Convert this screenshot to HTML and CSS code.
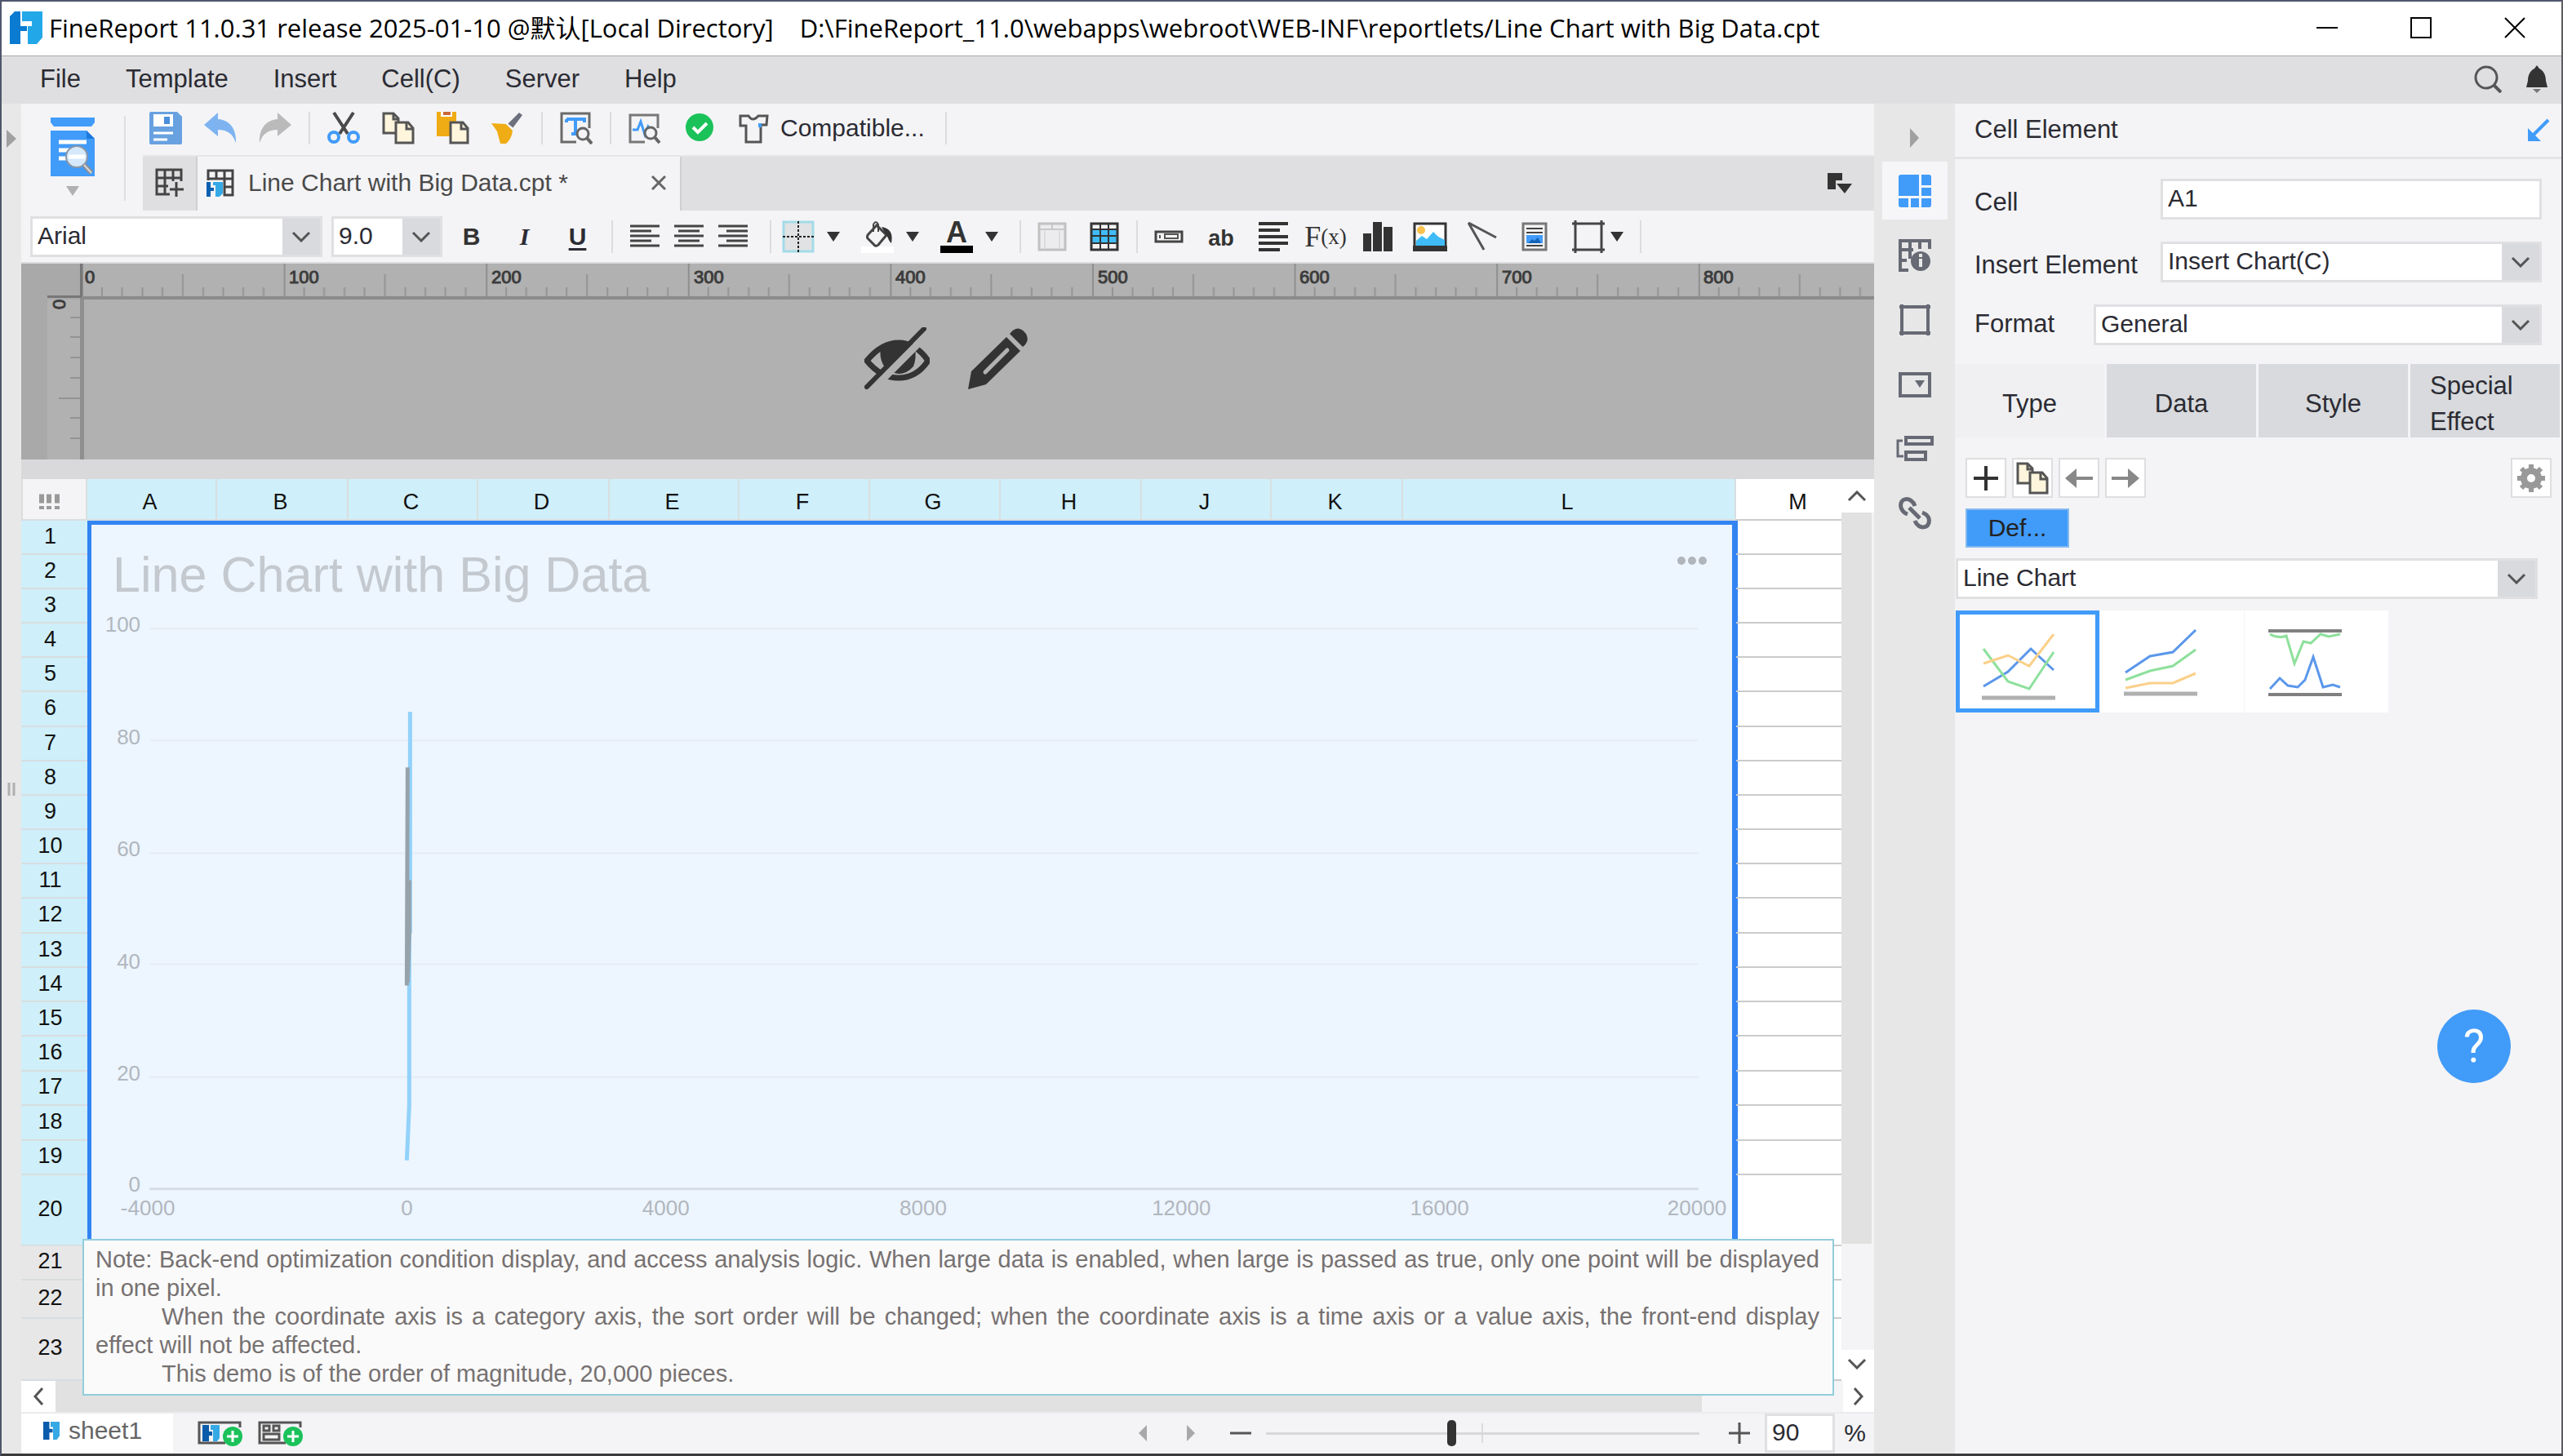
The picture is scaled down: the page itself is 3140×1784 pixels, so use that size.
FILE: index.html
```html
<!DOCTYPE html>
<html lang="en">
<head>
<meta charset="utf-8">
<meta name="viewport" content="width=device-width, initial-scale=1">
<title>FineReport Designer</title>
<link rel="stylesheet" href="styles.css">
</head>
<body>
<svg class="defs" width="0" height="0" aria-hidden="true">
  <symbol id="i-caret" viewBox="0 0 16 14"><path d="M0 1h16L8 13z" fill="#333"/></symbol>
  <symbol id="i-chevron" viewBox="0 0 24 14"><path d="M2 2l10 10L22 2" fill="none" stroke="#555" stroke-width="3"/></symbol>
  <symbol id="i-copy" viewBox="0 0 40 40"><path d="M2 2h12l6 6v18H2z" fill="#fff5dc" stroke="#555" stroke-width="3"/><path d="M14 2v7h6" fill="none" stroke="#555" stroke-width="3"/><path d="M17 13h15l6 7v18H17z" fill="#fff5dc" stroke="#555" stroke-width="3"/><path d="M30 13v8h8" fill="none" stroke="#555" stroke-width="3"/></symbol>
  <symbol id="i-logo" viewBox="0 0 40 40"><path d="M0 6L6 0h7v18h8v6h-8v16H0z" fill="#0a7bd1"/><path d="M15 0h25v32l-7 8H22V18h5v-6H15z" fill="#22a8e8"/></symbol>
</svg>

<div class="window">
  <header class="titlebar">
    <svg class="logo"><use href="#i-logo"/></svg>
    <h1 class="title"><span>FineReport 11.0.31 release 2025-01-10 @默认[Local Directory]</span><span>D:\FineReport_11.0\webapps\webroot\WEB-INF\reportlets/Line Chart with Big Data.cpt</span></h1>
    <div class="window-buttons">
      <button type="button" aria-label="Minimize"><svg width="26" height="26"><path d="M0 13h26" stroke="#000" stroke-width="2"/></svg></button>
      <button type="button" aria-label="Maximize"><svg width="26" height="26"><path d="M1 1h24v24H1z" fill="none" stroke="#000" stroke-width="2"/></svg></button>
      <button type="button" aria-label="Close"><svg width="26" height="26"><path d="M1 1l24 24M25 1L1 25" stroke="#000" stroke-width="2"/></svg></button>
    </div>
  </header>

  <nav class="menubar">
    <button type="button">File</button>
    <button type="button">Template</button>
    <button type="button">Insert</button>
    <button type="button">Cell(C)</button>
    <button type="button">Server</button>
    <button type="button">Help</button>
    <div class="menubar-tools">
      <button type="button" aria-label="Search"><svg width="34" height="34"><circle cx="15" cy="15" r="13" fill="none" stroke="#555" stroke-width="3"/><path d="M24 24l9 9" stroke="#555" stroke-width="4"/></svg></button>
      <button type="button" aria-label="Notifications"><svg width="26" height="34"><path d="M13 0l3 4c6 3 8 9 8 15l2 8H0l2-8C2 13 4 7 10 4z" fill="#333"/><path d="M8 29h10l-5 5z" fill="#777"/></svg></button>
    </div>
  </nav>

  <div class="main">
    <aside class="rail">
      <button type="button" aria-label="Expand left panel"><svg width="14" height="22"><path d="M1 0l12 11L1 22z" fill="#a0a0a0"/></svg></button>
      <svg class="grip" width="10" height="16"><path d="M2 0v16M8 0v16" stroke="#b0b0b0" stroke-width="3"/></svg>
    </aside>

    <main class="workspace">
      <div class="top">
        <button type="button" class="preview" aria-label="Preview">
          <svg width="54" height="72"><path d="M0 0h54v6l-4 5H4L0 6z" fill="#419bf9"/><path d="M0 16h44l10 10v46H0z" fill="#419bf9"/><path d="M44 16v10h10z" fill="#1b78dc"/><path d="M10 30h34M10 40h16M10 50h12" stroke="#fff" stroke-width="5"/><circle cx="32" cy="48" r="13" fill="#d6e9fb" stroke="#8a97a5" stroke-width="2"/><path d="M22 48h20" stroke="#fff" stroke-width="5"/><path d="M41 58l9 10" stroke="#8a8f96" stroke-width="6"/><path d="M41 58l9 10" stroke="#d8d8d8" stroke-width="2"/></svg>
          <svg width="16" height="12"><path d="M0 0h16L8 12z" fill="#b0b0b0"/></svg>
        </button>
        <div class="top-right">
          <div class="toolbar">
            <button type="button" class="tool" aria-label="Save"><svg class="icon"><path d="M0 2q0-2 2-2h32l6 6v32q0 2-2 2H2q-2 0-2-2z" fill="#68a1e0"/><path d="M5 3h24v15H5z" fill="#fff"/><path d="M18 6h7v9h-7z" fill="#4a8fdd"/><path d="M5 26h24M5 34h17" stroke="#fff" stroke-width="3"/></svg></button>
            <button type="button" class="tool" aria-label="Undo"><svg class="icon"><path d="M0 16L17 1v8c15 1 23 13 22 29C35 27 29 22 17 22v8z" fill="#7db3f0"/></svg></button>
            <button type="button" class="tool" aria-label="Redo"><svg class="icon"><path d="M40 16L23 1v8C8 10 0 22 1 38 5 27 11 22 23 22v8z" fill="#bababa"/></svg></button>
            <span class="divider"></span>
            <button type="button" class="tool" aria-label="Cut"><svg class="icon"><path d="M8 1l17 26M32 1L15 27" stroke="#4a4a4a" stroke-width="4"/><circle cx="8" cy="31" r="6" fill="none" stroke="#419bf9" stroke-width="4"/><circle cx="32" cy="31" r="6" fill="none" stroke="#419bf9" stroke-width="4"/></svg></button>
            <button type="button" class="tool" aria-label="Copy"><svg class="icon"><use href="#i-copy"/></svg></button>
            <button type="button" class="tool" aria-label="Paste"><svg class="icon"><path d="M0 0h24v30H0z" fill="#f0ac14"/><path d="M5 0h14v6H5z" fill="#fff"/><path d="M8 0h9v4H8z" fill="#c8693a"/><path d="M17 13h15l6 7v18H17z" fill="#fff5dc" stroke="#555" stroke-width="3"/><path d="M30 13v8h8" fill="none" stroke="#555" stroke-width="3"/></svg></button>
            <button type="button" class="tool" aria-label="Format painter"><svg class="icon"><path d="M20 15L34 1l4 3-12 16z" fill="#6c6f7c"/><path d="M0 14l18 1 8 8q-1 10-8 16h-7L7 24z" fill="#f0ac14"/><path d="M17 13l11 9" stroke="#f4f4f6" stroke-width="2"/></svg></button>
            <span class="divider"></span>
            <button type="button" class="tool" aria-label="Find"><svg class="icon"><path d="M20 37H2V2h34v18" fill="none" stroke="#6a6a6a" stroke-width="3"/><path d="M8 9v4M8 9h22v4M19 9v18M14 27h10" fill="none" stroke="#419bf9" stroke-width="4"/><circle cx="28" cy="27" r="7" fill="#f4f4f6" stroke="#666" stroke-width="3"/><path d="M33 32l6 7" stroke="#666" stroke-width="4"/></svg></button>
            <span class="divider"></span>
            <button type="button" class="tool" aria-label="Template check"><svg class="icon"><path d="M20 37H2V4h34v16" fill="none" stroke="#777" stroke-width="3"/><path d="M5 22h6l4-10 5 16 4-10 3 4h6" fill="none" stroke="#419bf9" stroke-width="3"/><circle cx="27" cy="26" r="7" fill="#f4f4f6" stroke="#666" stroke-width="3"/><path d="M32 31l6 7" stroke="#666" stroke-width="4"/></svg></button>
            <button type="button" class="tool" aria-label="Check passed"><svg class="icon"><circle cx="20" cy="19" r="17" fill="#1bc25a"/><path d="M12 19l6 6 11-11" fill="none" stroke="#fff" stroke-width="4"/></svg></button>
            <button type="button" class="tool tool-text"><svg class="icon"><path d="M6 5h8q5 8 12 0h11l-1 11h-7v21H11V17H4V5z" fill="none" stroke="#555" stroke-width="3"/><path d="M26 14h4v5h-4z" fill="#419bf9"/></svg>Compatible...</button>
            <span class="divider"></span>
          </div>
          <div class="tabs">
            <button type="button" class="tab-new" aria-label="New template"><svg width="36" height="36"><path d="M18 32H2V2h30v14M2 12h30M2 22h14M12 2v30M22 2v14" fill="none" stroke="#444" stroke-width="3"/><path d="M18 26h17M26 17v18" stroke="#444" stroke-width="3"/></svg></button>
            <div class="tab">
              <svg width="34" height="34"><path d="M2 14V2h30v30H22V12M2 12h30M12 2v10M22 2v10M22 22h10" fill="none" stroke="#444" stroke-width="3"/><path d="M0 16h5v7h4v4H5v7H0z" fill="#0a5fb0"/><path d="M8 16h12v14l-4 4h-5V20H8z" fill="#35a9e6"/></svg>
              <span>Line Chart with Big Data.cpt *</span>
              <button type="button" aria-label="Close tab"><svg width="18" height="18"><path d="M1 1l16 16M17 1L1 17" stroke="#666" stroke-width="3"/></svg></button>
            </div>
            <button type="button" class="tab-list" aria-label="Template list"><svg width="30" height="26"><path d="M0 0h18v9h-8v11H0z" fill="#333"/><path d="M11 13h19l-9 12z" fill="#333"/></svg></button>
          </div>
        </div>
      </div>

      <div class="formatbar">
        <div class="select font-name"><select aria-label="Font"><option>Arial</option></select><span class="arrow"><svg><use href="#i-chevron"/></svg></span></div>
        <div class="select font-size"><select aria-label="Font size"><option>9.0</option></select><span class="arrow"><svg><use href="#i-chevron"/></svg></span></div>
        <div class="letters">
          <button type="button" class="tool bold">B</button>
          <button type="button" class="tool italic">I</button>
          <button type="button" class="tool underline">U</button>
        </div>
        <span class="divider"></span>
        <div class="aligns">
          <button type="button" aria-label="Align left"><svg width="36" height="30"><path d="M0 2h36M0 8h26M0 14h36M0 20h26M0 26h36" stroke="#444" stroke-width="3"/></svg></button>
          <button type="button" aria-label="Align center"><svg width="36" height="30"><path d="M0 2h36M5 8h26M0 14h36M5 20h26M0 26h36" stroke="#444" stroke-width="3"/></svg></button>
          <button type="button" aria-label="Align right"><svg width="36" height="30"><path d="M0 2h36M10 8h26M0 14h36M10 20h26M0 26h36" stroke="#444" stroke-width="3"/></svg></button>
        </div>
        <span class="divider"></span>
        <button type="button" class="drop" aria-label="Borders"><svg class="icon"><path d="M2 2h36v36H2z" fill="#e0e2e4" stroke="#a3dbe8" stroke-width="3"/><path d="M20 1v38M1 20h38" stroke="#222" stroke-width="2" stroke-dasharray="3 2"/></svg><svg class="caret"><use href="#i-caret"/></svg></button>
        <button type="button" class="drop" aria-label="Fill color"><svg class="icon"><path d="M0 32h40v8H0z" fill="#fff"/><path d="M19 6L8 18q-1 3 0 4l9 9q2 1 4-1l10-12z" fill="none" stroke="#444" stroke-width="3"/><path d="M15 14V5q3-6 6 0v9" fill="none" stroke="#444" stroke-width="2"/><path d="M25 8c12 2 14 10 12 20-3-2-4-8-7-11z" fill="#333"/></svg><svg class="caret"><use href="#i-caret"/></svg></button>
        <button type="button" class="drop" aria-label="Font color"><span class="font-color">A</span><svg class="caret"><use href="#i-caret"/></svg></button>
        <span class="divider"></span>
        <button type="button" class="tool" aria-label="Merge cells"><svg width="36" height="36"><path d="M2 2h32v32H2z" fill="#ececef" stroke="#c0c0c0" stroke-width="3"/><path d="M2 9h32M18 2v7" stroke="#c8c8c8" stroke-width="2"/><path d="M9 11v22M27 11v22" stroke="#dcdcdc" stroke-width="2"/></svg></button>
        <button type="button" class="tool" aria-label="Cell grid"><svg width="36" height="36"><path d="M2 2h32v32H2z" fill="#f4f4f6"/><path d="M2 9h32v17H2z" fill="#3fbcf8"/><path d="M2 2h32v32H2z" fill="none" stroke="#333" stroke-width="3"/><path d="M2 9h32M2 17h32M2 26h32M13 2v32M23 2v32" fill="none" stroke="#333" stroke-width="2"/></svg></button>
        <span class="divider"></span>
        <button type="button" class="tool" aria-label="Widget"><svg width="36" height="16"><path d="M2 2h32v12H2z" fill="none" stroke="#444" stroke-width="3"/><path d="M7 6v4M13 5h16v5H13z" fill="none" stroke="#555" stroke-width="2"/></svg></button>
        <button type="button" class="tool ab">ab</button>
        <button type="button" class="tool" aria-label="Rich text"><svg width="36" height="38"><path d="M0 3h36M0 11h26M0 19h36M0 27h36M0 35h26" stroke="#333" stroke-width="4"/></svg></button>
        <button type="button" class="tool formula">F<small>(x)</small></button>
        <button type="button" class="tool" aria-label="Chart"><svg width="36" height="36"><path d="M0 14h10v22H0zM12 0h11v36H12zM25 6h11v30H25z" fill="#333"/></svg></button>
        <button type="button" class="tool" aria-label="Image"><svg width="42" height="36"><path d="M2 2h38v30H2z" fill="#fff" stroke="#333" stroke-width="3"/><circle cx="10" cy="10" r="5" fill="#fbc14d"/><path d="M4 29v-6l7-6 6 4 8-9 6 6 8 4v7z" fill="#3fbcf8"/><path d="M0 29h42v7H0z" fill="#333"/></svg></button>
        <button type="button" class="tool" aria-label="Slope line"><svg width="36" height="36"><path d="M1 1l34 18M1 1l19 33" stroke="#555" stroke-width="3"/></svg></button>
        <button type="button" class="tool" aria-label="Sub report"><svg width="32" height="36"><path d="M2 2h28v32H2z" fill="#f4f4f6" stroke="#777" stroke-width="3"/><path d="M6 8h20M6 13h20M6 29h20" stroke="#444" stroke-width="2"/><path d="M6 16h20v10H6z" fill="#419bf9"/><path d="M8 26l5-5 3 2 4-4 4 7z" fill="#1464b8"/></svg></button>
        <button type="button" class="drop compact" aria-label="Floating element"><svg class="icon"><path d="M4 0v40M36 0v40M0 4h40M0 36h40" stroke="#444" stroke-width="3"/></svg><svg class="caret"><use href="#i-caret"/></svg></button>
        <span class="divider"></span>
      </div>

      <section class="stage">
        <svg class="ruler-top" aria-hidden="true">
          <defs>
            <pattern id="ticks" x="74" y="0" width="247.6" height="44" patternUnits="userSpaceOnUse">
              <path d="M1 0v40" stroke="#8f8f8f" stroke-width="2"/>
              <path d="M124 13v27" stroke="#949494" stroke-width="2"/>
              <path d="M25 29v11M49.500 29v11M74.500 29v11M99 29v11M149 29v11M173.500 29v11M198 29v11M223 29v11" stroke="#949494" stroke-width="2"/>
            </pattern>
          </defs>
          <rect width="74" height="44" fill="#a9a9a9"/>
          <rect x="74" width="100%" height="44" fill="url(#ticks)"/>
          <rect x="72" width="3" height="44" fill="#777"/>
          <rect x="72" y="40" width="100%" height="4" fill="#8b8b8b"/>
          <rect x="32" y="39" width="42" height="3" fill="#777"/>
          <g class="ruler-label"><text x="78" y="24">0</text><text x="328" y="24">100</text><text x="576" y="24">200</text><text x="824" y="24">300</text><text x="1071" y="24">400</text><text x="1319" y="24">500</text><text x="1566" y="24">600</text><text x="1814" y="24">700</text><text x="2061" y="24">800</text></g>
        </svg>
        <div class="stage-body">
          <svg class="ruler-left" aria-hidden="true">
            <rect width="32" height="100%" fill="#a9a9a9"/>
            <rect x="72" width="5" height="100%" fill="#8f8f8f"/>
            <path d="M60 22h12M60 46h12M60 71h12M60 96h12M46 121h26M60 145h12M60 170h12" stroke="#949494" stroke-width="2"/>
            <text class="ruler-label" transform="translate(54 12) rotate(-90)">0</text>
          </svg>
          <div class="stage-tools">
            <button type="button" aria-label="Hide"><svg width="80" height="78"><path d="M3 41q18-22 39-22t36 22q-14 21-36 21T3 41z" fill="none" stroke="#333" stroke-width="7"/><path d="M20 26q20-10 42 0 2 12-2 22-8 9-18 9-14-2-19-11-5-10-3-20z" fill="#333"/><path d="M78 8L7 79" stroke="#b1b1b1" stroke-width="9"/><path d="M73 2L3 73" stroke="#333" stroke-width="6" stroke-linecap="round"/></svg></button>
            <button type="button" aria-label="Edit"><svg width="76" height="78"><path d="M48 12l17 17-42 41L1 76l4-22z" fill="#333"/><path d="M52 8q10-13 20 0 5 9-4 16z" fill="#333"/><path d="M22 55l27-27" stroke="#b1b1b1" stroke-width="5" stroke-linecap="round"/></svg></button>
          </div>
        </div>
      </section>
      <div class="splitter"></div>

      <section class="sheet">
        <div class="sheet-main">
          <table class="cells">
            <colgroup><col class="w81"><col class="w159"><col class="w161"><col class="w159"><col class="w161"><col class="w159"><col class="w160"><col class="w160"><col class="w173"><col class="w159"><col class="w161"><col class="w408"><col></colgroup>
            <thead><tr><th class="corner"><svg width="26" height="20"><path d="M0 6h6M9 6h6M19 6h6" stroke="#999" stroke-width="11"/><path d="M0 17h6M9 17h6M19 17h6" stroke="#999" stroke-width="4"/></svg></th><th>A</th><th>B</th><th>C</th><th>D</th><th>E</th><th>F</th><th>G</th><th>H</th><th>J</th><th>K</th><th>L</th><th class="plain">M</th></tr></thead>
            <tbody>
              <tr><th>1</th>
                <td class="chart" colspan="11" rowspan="20">
                  <svg viewBox="5 5 2008 878" role="img" aria-label="Line Chart with Big Data">
                    <path d="M76 132h1896M76 269h1896M76 407h1896M76 543h1896M76 681h1896" stroke="#e5ecf4" stroke-width="2"/>
                    <path d="M76 818h1896" stroke="#d6dde5" stroke-width="3"/>
                    <path d="M395 234v271M394 505v210l-3 68" fill="none" stroke="#92d2fb" stroke-width="5"/>
                    <path d="M392 302l-1 267M394 440v65l-2 60" fill="none" stroke="#97a3ab" stroke-width="5"/>
                    <text class="chart-title" x="31" y="87">Line Chart with Big Data</text>
                    <g fill="#b0b5bb"><circle cx="1951" cy="49" r="5"/><circle cx="1964" cy="49" r="5"/><circle cx="1977" cy="49" r="5"/></g>
                    <g class="axis axis-y"><text x="65" y="136">100</text><text x="65" y="274">80</text><text x="65" y="411">60</text><text x="65" y="548">40</text><text x="65" y="685">20</text><text x="65" y="821">0</text></g>
                    <g class="axis axis-x"><text x="74" y="850">-4000</text><text x="391" y="850">0</text><text x="708" y="850">4000</text><text x="1023" y="850">8000</text><text x="1339" y="850">12000</text><text x="1655" y="850">16000</text><text x="1970" y="850">20000</text></g>
                  </svg>
                </td><td></td></tr>
              <tr><th>2</th><td></td></tr>
              <tr><th>3</th><td></td></tr>
              <tr><th>4</th><td></td></tr>
              <tr><th>5</th><td></td></tr>
              <tr><th>6</th><td></td></tr>
              <tr><th>7</th><td></td></tr>
              <tr><th>8</th><td></td></tr>
              <tr><th>9</th><td></td></tr>
              <tr><th>10</th><td></td></tr>
              <tr><th>11</th><td></td></tr>
              <tr><th>12</th><td></td></tr>
              <tr><th>13</th><td></td></tr>
              <tr><th>14</th><td></td></tr>
              <tr><th>15</th><td></td></tr>
              <tr><th>16</th><td></td></tr>
              <tr><th>17</th><td></td></tr>
              <tr><th>18</th><td></td></tr>
              <tr><th>19</th><td></td></tr>
              <tr class="h87"><th>20</th><td></td></tr>
              <tr class="unselected"><th>21</th><td colspan="11"></td><td></td></tr>
              <tr class="unselected h47"><th>22</th><td colspan="11"></td><td></td></tr>
              <tr class="unselected h76"><th>23</th><td colspan="11"></td><td></td></tr>
            </tbody>
          </table>
          <div class="vscroll">
            <button type="button" class="up" aria-label="Scroll up"><svg><use href="#i-chevron"/></svg></button>
            <div class="vthumb"></div>
            <button type="button" class="down" aria-label="Scroll down"><svg><use href="#i-chevron"/></svg></button>
          </div>
        </div>
        <div class="hscroll">
          <button type="button" aria-label="Scroll left"><svg width="14" height="24"><path d="M12 2L3 12l9 10" fill="none" stroke="#555" stroke-width="3"/></svg></button>
          <div class="hthumb"></div>
          <button type="button" aria-label="Scroll right"><svg width="14" height="24"><path d="M2 2l9 10-9 10" fill="none" stroke="#555" stroke-width="3"/></svg></button>
        </div>
        <div class="note">
          <p>Note: Back-end optimization condition display, and access analysis logic. When large data is enabled, when large is passed as true, only one point will be displayed in one pixel.</p>
          <p class="indent full">When the coordinate axis is a category axis, the sort order will be changed; when the coordinate axis is a time axis or a value axis, the front-end display</p>
          <p>effect will not be affected.</p>
          <p class="indent">This demo is of the order of magnitude, 20,000 pieces.</p>
        </div>
      </section>

      <footer class="statusbar">
        <button type="button" class="sheet-tab"><svg width="20" height="22" viewBox="0 0 40 40" preserveAspectRatio="none"><path d="M0 0h15v16h8v8h-8v16H0z" fill="#0a5bab"/><path d="M18 0h22v32l-7 8H24V12h-6z" fill="#35a9e6"/></svg>sheet1</button>
        <button type="button" class="add-sheet" aria-label="Add report sheet"><svg width="56" height="32"><path d="M34 28H2V3h50v6" fill="none" stroke="#555" stroke-width="3"/><path d="M6 6h8v8h4v5h-4v7H6z" fill="#0a5bab"/><path d="M16 6h11v16l-3 4h-5V12h-3z" fill="#35a9e6"/><circle cx="43" cy="20" r="12" fill="#1bc25a"/><path d="M36 20h14M43 13v14" stroke="#fff" stroke-width="3"/></svg></button>
        <button type="button" class="add-sheet" aria-label="Add form sheet"><svg width="56" height="32"><path d="M34 28H2V3h50v6" fill="none" stroke="#555" stroke-width="3"/><path d="M7 7h7v6H7zM19 7h7v6h-7zM7 17h19v7H7z" fill="none" stroke="#555" stroke-width="3"/><circle cx="43" cy="20" r="12" fill="#1bc25a"/><path d="M36 20h14M43 13v14" stroke="#fff" stroke-width="3"/></svg></button>
        <div class="zoom">
          <button type="button" class="nav" aria-label="Previous sheet"><svg width="10" height="20"><path d="M10 0v20L0 10z" fill="#a8a8a8"/></svg></button>
          <button type="button" class="nav" aria-label="Next sheet"><svg width="10" height="20"><path d="M0 0v20l10-10z" fill="#a8a8a8"/></svg></button>
          <button type="button" aria-label="Zoom out"><svg width="26" height="26"><path d="M0 13h26" stroke="#555" stroke-width="3"/></svg></button>
          <input class="slider" type="range" min="10" max="190" value="87" aria-label="Zoom">
          <button type="button" aria-label="Zoom in"><svg width="26" height="26"><path d="M0 13h26M13 0v26" stroke="#555" stroke-width="3"/></svg></button>
          <label class="percent"><input type="text" value="90" aria-label="Zoom percent"> %</label>
        </div>
      </footer>
    </main>

    <nav class="iconbar">
      <button type="button" aria-label="Collapse right panel"><svg width="14" height="24"><path d="M1 0l11 12L1 24z" fill="#a0a0a0"/></svg></button>
      <button type="button" class="active" aria-label="Cell element"><svg class="icon"><path d="M3 0h22v26H0V3q0-3 3-3zM28 0h9q3 0 3 3v10H28zM28 16h12v10H28zM0 29h12v11H3q-3 0-3-3zM15 29h10v11H15zM28 29h12v8q0 3-3 3h-9z" fill="#419bf9"/></svg></button>
      <button type="button" aria-label="Cell attributes"><svg class="icon"><path d="M12 38H2V2h36v10M2 13h16M14 2v22M26 2v10M2 26h8" fill="none" stroke="#676a74" stroke-width="4"/><circle cx="27" cy="27" r="12" fill="#676a74"/><path d="M27 24v10M27 18v4" stroke="#e8e8e8" stroke-width="4"/></svg></button>
      <button type="button" aria-label="Floating element"><svg class="icon"><path d="M4 1v38M36 1v38M1 4h38M1 36h38" stroke="#676a74" stroke-width="4"/></svg></button>
      <button type="button" aria-label="Widget settings"><svg class="icon"><path d="M2 7h36v27H2z" fill="none" stroke="#676a74" stroke-width="4"/><path d="M20 15h12l-6 9z" fill="#676a74"/></svg></button>
      <button type="button" aria-label="Condition attributes"><svg width="46" height="40"><path d="M12 6h32v8H12zM12 24h24v9H12z" fill="none" stroke="#676a74" stroke-width="4"/><path d="M8 10H2v19h7" fill="none" stroke="#676a74" stroke-width="3"/></svg></button>
      <button type="button" aria-label="Hyperlink"><svg class="icon"><g fill="none" stroke="#676a74" stroke-width="5"><path d="M20 11C16-1 0 0 3 13q2 6 8 8M20 29c4 12 20 10 17-3q-2-5-8-7"/><path d="M13 13l13 13"/></g></svg></button>
    </nav>

    <aside class="panel">
      <header class="panel-head"><h2>Cell Element</h2><button type="button" aria-label="Pop out"><svg width="28" height="28"><path d="M26 2L8 20" stroke="#419bf9" stroke-width="4"/><path d="M1 12v16h16z" fill="#419bf9"/></svg></button></header>
      <form class="props">
        <div class="prop"><label for="cell">Cell</label><input id="cell" type="text" value="A1"></div>
        <div class="prop"><label for="element">Insert Element</label><div class="select"><select id="element"><option>Insert Chart(C)</option></select><span class="arrow"><svg><use href="#i-chevron"/></svg></span></div></div>
        <div class="prop short"><label for="format">Format</label><div class="select"><select id="format"><option>General</option></select><span class="arrow"><svg><use href="#i-chevron"/></svg></span></div></div>
      </form>
      <div class="panel-tabs">
        <button type="button" class="current">Type</button><button type="button">Data</button><button type="button">Style</button><button type="button" class="wrap">Special Effect</button>
      </div>
      <div class="chart-actions">
        <button type="button" aria-label="Add"><svg width="30" height="30"><path d="M0 15h30M15 0v30" stroke="#333" stroke-width="4"/></svg></button>
        <button type="button" aria-label="Duplicate"><svg class="icon"><use href="#i-copy"/></svg></button>
        <button type="button" aria-label="Move left"><svg width="34" height="24"><path d="M10 12h24" stroke="#888" stroke-width="4"/><path d="M0 12L14 0v24z" fill="#888"/></svg></button>
        <button type="button" aria-label="Move right"><svg width="34" height="24"><path d="M0 12h24" stroke="#888" stroke-width="4"/><path d="M34 12L20 0v24z" fill="#888"/></svg></button>
        <button type="button" class="gear" aria-label="Settings"><svg width="34" height="34"><circle cx="17" cy="17" r="9" fill="none" stroke="#999" stroke-width="8"/><path d="M17 0v5M17 29v5M0 17h5M29 17h5M5 5l4 4M25 25l4 4M29 5l-4 4M9 25l-4 4" stroke="#999" stroke-width="6"/></svg></button>
      </div>
      <button type="button" class="chart-name">Def...</button>
      <div class="select chart-kind"><select aria-label="Chart type"><option>Line Chart</option></select><span class="arrow"><svg><use href="#i-chevron"/></svg></span></div>
      <div class="thumbs">
        <button type="button" class="chosen" aria-label="Line"><svg width="96" height="84" fill="none" stroke-width="3"><path d="M4 64l30-18 28-28 28 26" stroke="#5b97ea"/><path d="M4 18l30 40 26 9 30-45" stroke="#8ee09c"/><path d="M4 36l30-10 26 13L90 0" stroke="#fbd08a"/><path d="M2 78h90" stroke="#b0b0b0" stroke-width="5"/></svg></button>
        <button type="button" aria-label="Stacked line"><svg width="96" height="84" fill="none" stroke-width="3"><path d="M4 53l30-20 28-5L90 1" stroke="#5b97ea"/><path d="M4 62l30-11 28-6 28-20" stroke="#8ee09c"/><path d="M4 72l30-6h28l28-12" stroke="#fbd08a"/><path d="M2 79h90" stroke="#b0b0b0" stroke-width="5"/></svg></button>
        <button type="button" aria-label="Mirrored line"><svg width="96" height="84" fill="none" stroke-width="3"><path d="M4 6q10 6 20 2l10 34 11-27 9 2L66 6l10 3 14-3" stroke="#8ee09c"/><path d="M4 73l12-13 10 9 12 2 9-9 10-28 12 37 12-3 9 3" stroke="#5b97ea"/><path d="M2 2h90M2 80h90" stroke="#808080" stroke-width="4"/></svg></button>
      </div>
      <button type="button" class="help" aria-label="Help">?</button>
    </aside>
  </div>
</div>
</body>
</html>
```
FILE: styles.css
```css
* { box-sizing: border-box; }

body {
  margin: 0;
  background: #3f4044;
  font-family: "Liberation Sans", Arial, "Noto Sans CJK SC", sans-serif;
  font-size: 30px;
  line-height: 36px;
  color: #2b2b33;
}

button, input, select { font: inherit; color: inherit; border: 0; padding: 0; margin: 0; border-radius: 0; }
button { background: none; display: flex; align-items: center; justify-content: center; white-space: nowrap; }
svg { display: block; flex: none; }
.defs { position: absolute; }
h1, h2, p { margin: 0; font-weight: 400; font-size: inherit; }

.icon { width: 40px; height: 40px; }
.caret { width: 16px; height: 14px; }

.window {
  min-height: 100vh;
  display: flex;
  flex-direction: column;
  border: 2px solid #50566a;
  border-right-color: #5e5c60;
  border-bottom: 4px solid #3a3a3c;
  background: #f4f4f6;
}

/* Title bar and menu */
.titlebar { display: flex; align-items: center; height: 67px; padding: 0 0 2px 10px; background: #fff; border-bottom: 1px solid #aaa; }
.logo { width: 40px; height: 40px; margin-right: 8px; }
.title { display: flex; gap: 32px; flex: 1; font-family: "Open Sans", "Noto Sans", "Noto Sans CJK SC", sans-serif; font-size: 31px; color: #000; white-space: nowrap; }
.window-buttons { display: flex; }
.window-buttons button { width: 115px; height: 60px; }

.menubar { display: flex; align-items: center; gap: 55px; height: 58px; padding: 0 17px 2px 47px; background: #dfdfe1; font-size: 31px; }
.menubar-tools { display: flex; gap: 30px; margin-left: auto; }

.main { display: flex; flex: 1; }
.rail { width: 24px; background: #e8e8e8; display: flex; flex-direction: column; align-items: center; padding-top: 32px; }
.rail .grip { margin-top: 778px; }

.workspace { flex: 1; min-width: 0; display: flex; flex-direction: column; }

/* Upper toolbar and document tabs */
.top { display: flex; }
.preview { width: 128px; flex-direction: column; justify-content: flex-start; gap: 12px; padding: 2px 18px 4px 4px; margin: 15px 15px 12px 0; border-right: 2px solid #dedee0; }
.preview svg { margin-left: 14px; }
.top-right { flex: 1; display: flex; flex-direction: column; }
.toolbar { display: flex; align-items: center; height: 63px; padding-bottom: 3px; }
.toolbar .tool { width: 67px; height: 60px; }
.toolbar .tool-text { width: auto; padding-left: 13px; padding-right: 18px; gap: 13px; }
.divider { width: 17px; height: 40px; flex: none; background: linear-gradient(#dcdcde, #dcdcde) center / 2px 100% no-repeat; }

.tabs { display: flex; height: 68px; margin-left: 6px; background: #dfdfe1; border-top: 2px solid #e6e6e8; }
.tab-new { width: 67px; padding-bottom: 2px; border-right: 2px solid #cfcfd1; }
.tab { display: flex; align-items: center; width: 593px; padding: 0 17px 3px 11px; background: #f4f4f6; border-right: 2px solid #cfcfd1; color: #4a4a4a; }
.tab span { flex: 1; margin-left: 17px; }
.tab-list { margin-left: auto; padding-right: 27px; }

/* Format toolbar */
.formatbar { display: flex; align-items: center; height: 65px; padding-left: 11px; border-bottom: 2px solid #dcdcdc; }
.formatbar .divider { width: 15px; }
.formatbar .tool { width: 64px; height: 60px; }
.select { display: flex; height: 50px; background: #fff; border: 3px solid #e0e0e3; }
.select select { flex: 1; min-width: 0; appearance: none; background: none; padding: 0 0 2px 6px; outline: 0; }
.arrow { width: 46px; display: flex; align-items: center; justify-content: center; background: #d9dadd; }
.arrow svg { width: 24px; height: 14px; }
.font-name { width: 358px; }
.font-size { width: 136px; margin-left: 11px; }
.letters { display: flex; padding: 0 2px 0 3px; }
.letters .tool { width: 65px; }
.bold, .ab { font-weight: 700; color: #333; }
.ab { font-size: 27px; padding-top: 4px; }
.italic { font-family: "Liberation Serif", serif; font-style: italic; font-weight: 700; }
.underline { text-decoration: underline; font-weight: 700; text-decoration-thickness: 3px; text-underline-offset: 4px; }
.aligns { display: flex; padding: 0 11px 0 6px; }
.aligns button { width: 54px; height: 60px; }
.drop { width: 97px; height: 60px; justify-content: flex-start; padding-left: 7px; gap: 15px; }
.compact { width: 90px; padding-left: 14px; gap: 7px; }
.font-color { width: 40px; height: 40px; border-bottom: 9px solid #000; font-weight: 700; font-size: 36px; line-height: 30px; color: #333; }
.formula { font-family: "Liberation Serif", serif; color: #333; font-size: 36px; }
.formula small { font-size: 27px; }

/* Ruler and parameter stage */
.stage { background: #b1b1b1; }
.ruler-top { width: 100%; height: 44px; }
.ruler-label { font-size: 22px; fill: #3c3c3c; stroke: #3c3c3c; }
.stage-body { display: flex; }
.ruler-left { width: 77px; height: 196px; }
.stage-tools { flex: 1; display: flex; justify-content: center; align-items: flex-start; gap: 46px; padding: 34px 79px 0 0; }
.splitter { height: 24px; background: #d9d9db; }

/* Spreadsheet */
.sheet { position: relative; }
.sheet-main { display: flex; }
.cells { flex: 1; table-layout: fixed; border-spacing: 0; width: 100px; background: #fff; font-size: 27px; line-height: 30px; color: #111; }
.cells th, .cells td { padding: 0; border-bottom: 2px solid #cbcbcb; }
.cells th { font-weight: 400; background: #cfeffa; border-bottom-color: #d8dee0; }
.cells thead tr { height: 51px; }
.cells thead th { border-right: 2px solid #d8dee0; padding: 6px 4px 0 0; }
.cells thead .plain { background: #fff; border-right: 0; border-bottom-color: #cbcbcb; padding-left: 26px; }
.cells thead .corner { background: #f4f4f6; border-left: 2px solid #dcdcdc; padding-left: 20px; }
.cells tbody tr { height: 42px; }
.cells tbody tr:nth-child(6n) { height: 43px; }
.cells tbody th { padding: 0 10px 3px 0; text-align: center; }
.cells tbody .h87 { height: 87px; }
.cells tbody .h47 { height: 47px; }
.cells tbody .h76 { height: 76px; }
.cells .unselected th { background: #e7e7e8; }
.cells .chart { background: #edf5fe; border: 5px solid #3284f3; box-shadow: 2px 0 0 #3284f3; vertical-align: top; }
.chart svg { width: 100%; height: auto; }
.w81 { width: 81px; }
.w159 { width: 159px; }
.w160 { width: 160px; }
.w161 { width: 161px; }
.w173 { width: 173px; }
.w408 { width: 408px; }
.chart-title { font-size: 61px; fill: #c3c9cf; }
.axis { font-size: 26px; fill: #b1b7be; }
.axis-y { text-anchor: end; }
.axis-x { text-anchor: middle; }

.vscroll { width: 40px; display: flex; flex-direction: column; background: #f4f4f6; }
.vscroll button { height: 41px; padding-right: 2px; background: #fff; }
.vscroll svg { width: 24px; height: 14px; }
.vscroll .up svg { transform: rotate(180deg); }
.vthumb { height: 896px; margin-right: 3px; background: #e1e1e1; }
.vscroll .down { height: 38px; margin-top: auto; padding-bottom: 4px; }
.hscroll { display: flex; height: 40px; border-bottom: 2px solid #ececee; }
.hscroll button { width: 42px; background: #fff; }
.hscroll button:last-child { width: 38px; margin-left: auto; }
.hthumb { flex: 0 1 2017px; background: #e1e1e1; }

.note { position: absolute; left: 75px; right: 49px; bottom: 22px; height: 192px; padding: 6px 16px 0 14px; background: #fafafa; border: 2px solid #92cddc; font-size: 29px; line-height: 35px; color: #767171; text-align: justify; }
.indent { text-indent: 81px; }
.full { text-align-last: justify; }

/* Status bar */
.statusbar { display: flex; align-items: center; height: 49px; margin-top: auto; }
.sheet-tab { width: 186px; height: 49px; justify-content: flex-start; padding: 0 0 6px 27px; gap: 11px; background: #fff; color: #666; }
.add-sheet { margin-left: 18px; }
.sheet-tab + .add-sheet { margin-left: 30px; }
.zoom { display: flex; align-items: center; margin-left: auto; }
.zoom .nav { margin-right: 49px; }
.zoom .nav + .nav { margin-right: 43px; }
.slider { appearance: none; width: 531px; height: 34px; margin: 0 36px 0 18px; background: linear-gradient(#d8d8da, #d8d8da) center / 100% 3px no-repeat, linear-gradient(#dcdcde, #dcdcde) 50% 50% / 2px 24px no-repeat; }
.slider::-webkit-slider-thumb { appearance: none; width: 11px; height: 32px; border-radius: 5px; background: #333; }
.percent { display: flex; gap: 3px; align-items: center; margin-left: 18px; padding-right: 10px; white-space: pre; }
.percent input { width: 86px; height: 48px; border: 3px solid #e0e0e3; background: #fff; padding: 0 0 3px 6px; }

/* Right icon bar */
.iconbar { width: 99px; background: #e7e7e8; padding-top: 20px; display: flex; flex-direction: column; align-items: center; gap: 8px; }
.iconbar button { width: 80px; height: 71px; }
.iconbar button:first-child { height: 43px; }
.iconbar .active { background: #f6f6f8; }

/* Property panel */
.panel { position: relative; width: 743px; }
.panel-head { display: flex; justify-content: space-between; align-items: center; height: 68px; padding: 0 14px 2px 24px; border-bottom: 3px solid #e4e4e6; }
.panel h2, .prop label, .panel-tabs { font-size: 31px; }
.props { display: flex; flex-direction: column; gap: 27px; padding: 24px 24px 0; }
.prop { display: flex; }
.prop label { width: 228px; padding-top: 11px; white-space: nowrap; }
.prop.short label { width: 146px; padding-top: 6px; }
.prop input, .prop .select { flex: 1; min-width: 0; height: 50px; }
.prop input { background: #fff; border: 3px solid #e0e0e3; padding: 0 0 3px 6px; }
.panel-tabs { display: grid; grid-template-columns: repeat(4, 1fr); gap: 3px; height: 90px; margin: 23px 2px 0 0; }
.panel-tabs button { height: 90px; background: #d8dadd; padding-top: 8px; line-height: 44px; }
.panel-tabs .current { background: #f0f0f2; }
.panel-tabs .wrap { white-space: normal; text-align: left; padding: 8px 40px 0 24px; justify-content: flex-start; }
.chart-actions { display: flex; gap: 7px; margin: 25px 12px 0 13px; }
.chart-actions button { width: 50px; height: 49px; background: #fff; border: 2px solid #dedee1; }
.chart-actions .gear { margin-left: auto; }
.chart-name { width: 127px; height: 48px; margin: 13px 0 0 13px; background: #419bf9; border: 2px solid #86b9ee; color: #222; }
.chart-kind { margin: 13px 29px 0 1px; }
.thumbs { display: flex; gap: 1px; margin: 14px 0 0 1px; }
.thumbs button { width: 176px; height: 125px; background: #fff; padding: 4px 26px 0 0; }
.thumbs .chosen { border: 5px solid #419bf9; padding: 16px 20px 0 0; }
.help { position: absolute; right: 62px; bottom: 454px; width: 90px; height: 90px; border-radius: 50%; background: #419bf9; color: #fff; font-family: Roboto, sans-serif; font-size: 56px; }
```
